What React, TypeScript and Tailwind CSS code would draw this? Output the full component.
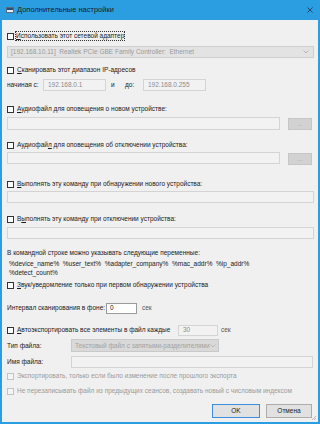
import React from "react";

const font = { fontFamily: '"Liberation Sans", Arial, sans-serif' };

function Box({ disabled = false }: { disabled?: boolean }) {
  return (
    <div
      className={
        "w-[7px] h-[7px] shrink-0 border " +
        (disabled ? "border-[#c4c4c4] bg-[#f4f4f4]" : "border-[#333333] bg-white")
      }
    />
  );
}

function Check({
  children,
  disabled = false,
  mt,
  focus = false,
}: {
  children: React.ReactNode;
  disabled?: boolean;
  mt: string;
  focus?: boolean;
}) {
  return (
    <div className={"flex items-center h-[10px] gap-[2px] " + mt}>
      <Box disabled={disabled} />
      <span
        className={
          "whitespace-nowrap leading-[8px] " +
          (disabled ? "text-[#9a9a9a]" : "text-[#1a1a1a]") +
          (focus ? " outline outline-1 outline-dotted outline-[#333]" : " px-[1px]")
        }
      >
        {children}
      </span>
    </div>
  );
}

function Chevron({ color = "#a8a8a8" }: { color?: string }) {
  return (
    <svg width="6" height="4" viewBox="0 0 6 4" className="shrink-0">
      <path d="M0.5 0.5 L3 3 L5.5 0.5" fill="none" stroke={color} strokeWidth="0.8" />
    </svg>
  );
}

function DisabledInput({ className = "", text = "" }: { className?: string; text?: string }) {
  return (
    <div
      className={
        "border border-[#d4d4d4] bg-[#f2f2f2] flex items-center px-[4px] text-[#8c8c8c] " + className
      }
    >
      {text}
    </div>
  );
}

function DotsBtn() {
  return (
    <div className="w-[24px] h-[12px] mt-[1px] bg-[#d2d2d2] border border-[#c6c6c6] flex items-center justify-center text-[#a0a0a0] leading-none text-[6px]">
      ...
    </div>
  );
}

export default function App() {
  return (
    <div
      className="w-[320px] h-[424px] bg-[#2a9ee0] relative overflow-hidden text-[6.5px]"
      style={font}
    >
      {/* title bar */}
      <div className="h-[20px] flex items-center pl-[6px] pr-[7px]">
        <div className="w-[8px] h-[6px] bg-[#e8eef4] border border-[#5b6b7e] flex flex-col mr-[3px]">
          <div className="h-[2px] bg-[#2d4d78]" />
        </div>
        <span className="text-[7.5px] text-[#1c1c1c] leading-none">Дополнительные настройки</span>
        <div className="flex-1" />
        <svg width="6" height="6" viewBox="0 0 6 6">
          <path d="M0.5 0.5 L5.5 5.5 M5.5 0.5 L0.5 5.5" stroke="#1f3f60" strokeWidth="1" />
        </svg>
      </div>
      {/* body */}
      <div className="absolute left-[2px] right-[2px] top-[20px] bottom-[2px] bg-[#f0f0f0] pl-[5px] pr-[5px] flex flex-col">
        <Check mt="mt-[11px]" focus>
          <span className="underline">И</span>спользовать этот сетевой адаптер
        </Check>
        <div className="mt-[5px] h-[12px] w-[307px] bg-[#e3e3e3] border border-[#cfcfcf] flex items-center pl-[3px] pr-[4px] text-[#9a9a9a]">
          <span className="whitespace-pre">[192.168.10.11]  Realtek PCIe GBE Family Controller:  Ethernet</span>
          <div className="flex-1" />
          <Chevron />
        </div>

        <Check mt="mt-[7px]">
          <span className="underline">С</span>канировать этот диапазон IP-адресов
        </Check>
        <div className="mt-[4px] h-[12px] flex items-center text-[#1a1a1a]">
          <span className="w-[36px]">начиная с:</span>
          <DisabledInput className="w-[63px] h-[12px]" text="192.168.0.1" />
          <span className="ml-[5px] w-[14px]">и</span>
          <span className="w-[18px]">до:</span>
          <DisabledInput className="w-[63px] h-[12px]" text="192.168.0.255" />
        </div>

        <Check mt="mt-[13px]">
          <span className="underline">А</span>удиофайл для оповещения о новом устройстве:
        </Check>
        <div className="mt-[3px] flex gap-[8px]">
          <DisabledInput className="w-[273px] h-[13px]" />
          <DotsBtn />
        </div>

        <Check mt="mt-[10px]">
          Аудиофай<span className="underline">л</span> для оповещения об отключении устройства:
        </Check>
        <div className="mt-[2px] flex gap-[8px]">
          <DisabledInput className="w-[273px] h-[12px]" />
          <DotsBtn />
        </div>

        <Check mt="mt-[14px]">
          <span className="underline">В</span>ыполнять эту команду при обнаружении нового устройства:
        </Check>
        <DisabledInput className="mt-[2px] w-[307px] h-[12px]" />

        <Check mt="mt-[11px]">
          В<span className="underline">ы</span>полнять эту команду при отключении устройства:
        </Check>
        <DisabledInput className="mt-[3px] w-[307px] h-[12px]" />

        <div className="mt-[9px] h-[10px] flex items-center text-[#1a1a1a] whitespace-nowrap">
          В командной строке можно указывать следующие переменные:
        </div>
        <div className="mt-[1px] pl-[2px] text-[#1a1a1a] leading-[9px] whitespace-pre">
          {"%device_name%  %user_text%  %adapter_company%  %mac_addr%  %ip_addr%\n%detect_count%"}
        </div>

        <Check mt="mt-[3px]">
          <span className="underline">З</span>вук/уведомление только при первом обнаружении устройства
        </Check>

        <div className="mt-[12px] h-[12px] flex items-center text-[#1a1a1a]">
          <span className="w-[99px] shrink-0 whitespace-nowrap">Интервал сканирования в фоне:</span>
          <div className="w-[31px] h-[11px] bg-white border border-[#9a9a9a] flex items-center px-[3px]">0</div>
          <span className="ml-[5px] text-[#555]">сек</span>
        </div>

        <div className="mt-[10px] h-[12px] flex items-center relative">
          <Check mt="mt-0">
            <span className="underline">А</span>втоэкспортировать все элементы в файл каждые
          </Check>
          <DisabledInput className="absolute left-[171px] w-[40px] h-[11px]" text="30" />
          <span className="absolute left-[214px] text-[#555]">сек</span>
        </div>

        <div className="mt-[3px] h-[13px] flex items-center text-[#1a1a1a]">
          <span className="w-[64px]">Тип файла:</span>
          <div className="w-[148px] h-[13px] bg-[#d9d9d9] border border-[#c9c9c9] flex items-center pl-[3px] pr-[4px] text-[#a2a2a2]">
            <span className="whitespace-nowrap">Текстовый файл с запятыми-разделителями</span>
            <div className="flex-1" />
            <Chevron color="#b0b0b0" />
          </div>
        </div>

        <div className="mt-[4px] h-[12px] flex items-center text-[#1a1a1a]">
          <span className="w-[64px]">Имя файла:</span>
          <DisabledInput className="w-[243px] h-[12px]" />
        </div>

        <Check mt="mt-[3px]" disabled>
          Экспортировать, только если было изменение после прошлого экспорта
        </Check>
        <Check mt="mt-[5px]" disabled>
          Не перезаписывать файл из предыдущих сеансов, создавать новый с числовым индексом
        </Check>

        <div className="mt-[8px] flex justify-end gap-[6px] pr-[1px]">
          <div className="w-[48px] h-[14px] bg-[#e1e1e1] border border-[#3c8fdc] flex items-center justify-center text-[#1a1a1a]">
            OK
          </div>
          <div className="w-[46px] h-[14px] bg-[#e1e1e1] border border-[#adadad] flex items-center justify-center text-[#1a1a1a]">
            Отмена
          </div>
        </div>
      </div>
      {/* resize grip */}
      <svg className="absolute right-[3px] bottom-[3px]" width="6" height="6" viewBox="0 0 6 6">
        <path d="M5 1 L1 5 M5 3 L3 5" stroke="#b0b0b0" strokeWidth="0.8" />
      </svg>
    </div>
  );
}
